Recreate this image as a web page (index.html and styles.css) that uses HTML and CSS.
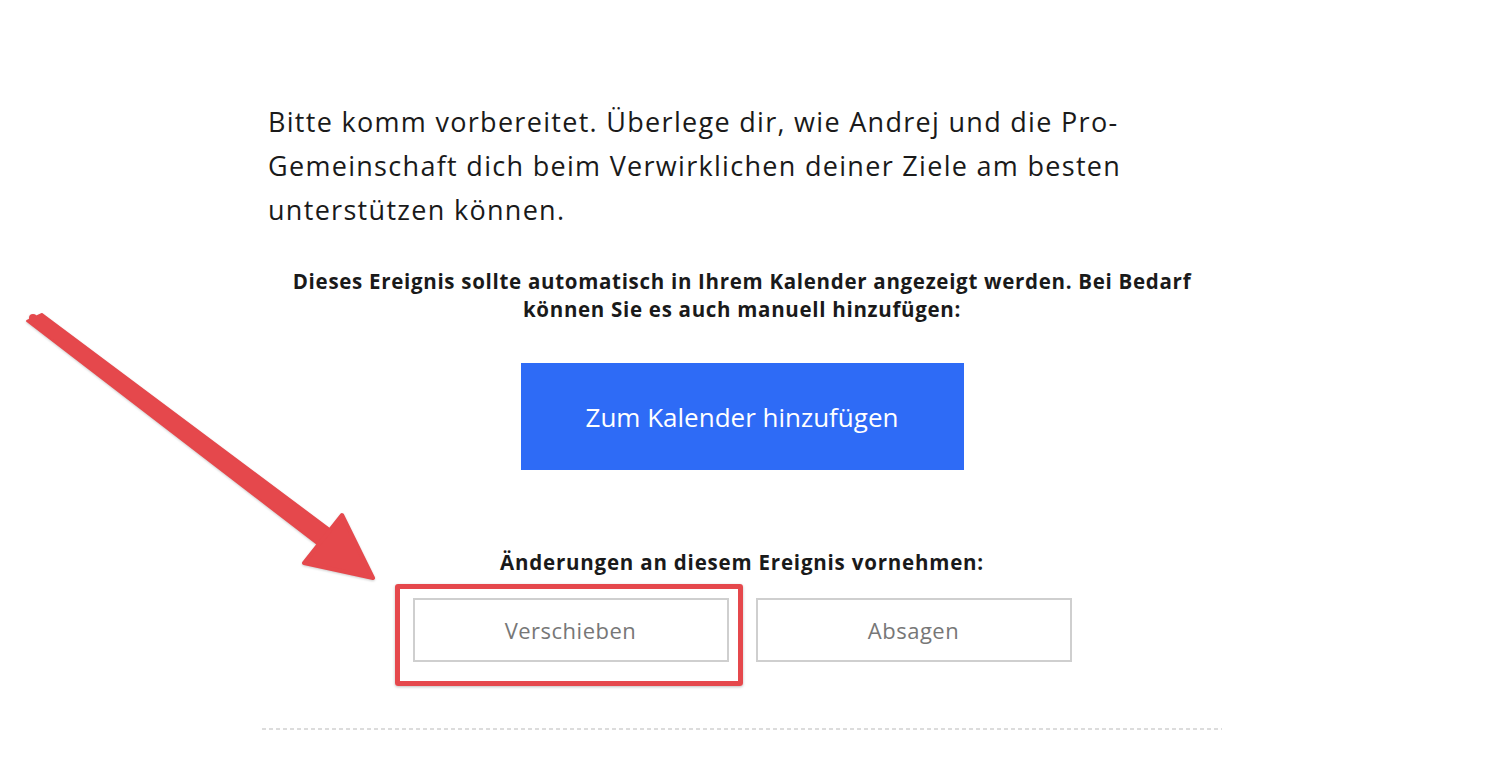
FILE: index.html
```html
<!DOCTYPE html>
<html lang="de">
<head>
<meta charset="utf-8">
<title>Ereignis</title>
<link rel="stylesheet" href="styles.css">
</head>
<body>
<main class="page">
  <p class="intro">Bitte komm vorbereitet. Überlege dir, wie Andrej und die Pro-Gemeinschaft dich beim Verwirklichen deiner Ziele am besten unterstützen können.</p>
  <p class="note">Dieses Ereignis sollte automatisch in Ihrem Kalender angezeigt werden. Bei Bedarf können Sie es auch manuell hinzufügen:</p>
  <div class="cta-row"><a class="cta" href="#">Zum Kalender hinzufügen</a></div>
  <p class="note changes">Änderungen an diesem Ereignis vornehmen:</p>
  <div class="actions">
    <a class="btn" href="#">Verschieben</a>
    <a class="btn" href="#">Absagen</a>
  </div>
  <hr class="divider">
</main>
<div class="highlight"></div>
<svg class="arrow" width="400" height="300" viewBox="0 0 400 300">
  <path d="M29 17 L330 242 L316 256 L14 24 Z" fill="#e5484c" stroke="#e5484c" stroke-width="2" stroke-linejoin="round"/>
  <path d="M329 218 L360 281 L291 266 Z" fill="#e5484c" stroke="#e5484c" stroke-width="4" stroke-linejoin="round"/>
  <circle cx="20" cy="21" r="4" fill="#e5484c"/>
</svg>
</body>
</html>
```
FILE: styles.css
```css
html, body {
  margin: 0;
  padding: 0;
  background: #fff;
}
body {
  font-family: "Open Sans", sans-serif;
  color: #1c1c1c;
  position: relative;
  min-height: 772px;
}
.page {
  width: 960px;
  margin-left: 262px;
  padding-top: 100px;
}
.intro {
  margin: 0 0 0 6px;
  width: 900px;
  font-size: 27px;
  letter-spacing: 1.3px;
  line-height: 44px;
  color: #1a1a1a;
}
.note {
  margin: 35px 0 0;
  text-align: center;
  font-weight: 700;
  font-size: 20.5px;
  letter-spacing: 0.7px;
  line-height: 28px;
  padding: 0 20px;
  color: #1a1a1a;
}
.cta-row {
  display: flex;
  justify-content: center;
  margin-top: 40px;
}
.cta {
  display: flex;
  align-items: center;
  justify-content: center;
  width: 443px;
  height: 107px;
  background: #2e6bf6;
  color: #fff;
  font-size: 26px;
  text-decoration: none;
}
.changes {
  margin-top: 78px;
  letter-spacing: 0.8px;
}
.actions {
  display: flex;
  justify-content: center;
  gap: 27px;
  margin-top: 22px;
}
.btn {
  box-sizing: border-box;
  width: 316px;
  height: 64px;
  border: 2px solid #cfcfcf;
  display: flex;
  align-items: center;
  justify-content: center;
  color: #777;
  font-size: 22px;
  letter-spacing: 0.5px;
  text-decoration: none;
}
.divider {
  margin: 66px 0 0;
  border: 0;
  height: 2px;
  background: repeating-linear-gradient(90deg, #dcdcdc 0 4px, transparent 4px 7px);
}
.highlight {
  position: absolute;
  left: 395px;
  top: 584px;
  width: 348px;
  height: 102px;
  box-sizing: border-box;
  border: 5px solid #e5484c;
  border-radius: 3px;
  box-shadow: 0 1px 3px rgba(0,0,0,0.25);
}
.arrow {
  position: absolute;
  left: 13px;
  top: 297px;
  filter: drop-shadow(0 1px 1px rgba(0,0,0,0.2));
}
```
